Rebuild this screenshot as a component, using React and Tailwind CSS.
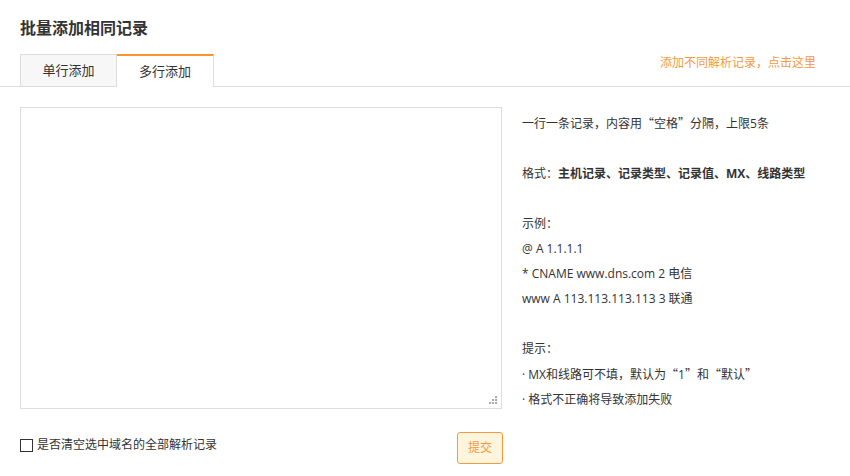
import React from "react";

const Q = ({ children }) => (
    <>
        <span className="font-['Noto_Sans_CJK_SC',sans-serif]">“</span>
        {children}
        <span className="font-['Noto_Sans_CJK_SC',sans-serif]">”</span>
    </>
);

const App = () => {
    return (
        <div className="w-[850px] h-[476px] bg-white text-[#333] font-['Open_Sans','Noto_Sans_CJK_SC',sans-serif]">
            <h1 className="pl-[20px] pt-[17px] h-[55px] text-[16px] leading-[22px] font-bold text-[#333]">批量添加相同记录</h1>
            <div className="flex items-end h-[32px] pl-[20px] border-b border-[#ddd]">
                <button className="w-[97px] h-[32px] bg-[#f7f7f7] border border-[#ddd] border-b-0 text-[13px] text-[#333]">单行添加</button>
                <button className="w-[97px] h-[33px] -mb-px bg-white border-r border-[#ddd] border-t-2 border-t-[#f7972f] text-[13px] text-[#333]">多行添加</button>
                <div className="flex-1" />
                <a className="mr-[34px] mb-[15px] text-[12px] leading-[16px] text-[#f59a3e] cursor-pointer">添加不同解析记录，点击这里</a>
            </div>
            <div className="flex pl-[20px] pt-[20px]">
                <div className="relative w-[482px] h-[302px]">
                    <textarea className="w-full h-full border border-[#ddd] outline-none resize-none p-2 text-[12px]" />
                    {/* dotted resize grip */}
                    <div className="absolute right-[5px] bottom-[5px] grid grid-cols-3 gap-[1px]">
                        <span className="w-[2px] h-[2px]" />
                        <span className="w-[2px] h-[2px]" />
                        <span className="w-[2px] h-[2px] bg-[#aaa]" />
                        <span className="w-[2px] h-[2px]" />
                        <span className="w-[2px] h-[2px] bg-[#aaa]" />
                        <span className="w-[2px] h-[2px] bg-[#aaa]" />
                        <span className="w-[2px] h-[2px] bg-[#aaa]" />
                        <span className="w-[2px] h-[2px] bg-[#aaa]" />
                        <span className="w-[2px] h-[2px] bg-[#aaa]" />
                    </div>
                </div>
                <div className="ml-[20px] pt-[3px] text-[12px] leading-[25px] text-[#333]">
                    <p>一行一条记录，内容用<Q>空格</Q>分隔，上限5条</p>
                    <p className="mt-[25px]">格式：<span className="font-bold">主机记录、记录类型、记录值、MX、线路类型</span></p>
                    <p className="mt-[25px]">示例：</p>
                    <p>@ A 1.1.1.1</p>
                    <p>* CNAME www.dns.com 2 电信</p>
                    <p>www A 113.113.113.113 3 联通</p>
                    <p className="mt-[25px]">提示：</p>
                    <p>· MX和线路可不填，默认为<Q>1</Q>和<Q>默认</Q></p>
                    <p>· 格式不正确将导致添加失败</p>
                </div>
            </div>
            <div className="flex items-center w-[503px] pl-[20px] mt-[20px] justify-between">
                <label className="flex items-center gap-[4px] text-[12px] text-[#333] -mt-[6px]">
                    <span className="w-[13px] h-[13px] border border-[#333] bg-white" />
                    是否清空选中域名的全部解析记录
                </label>
                <button className="w-[46px] h-[32px] rounded-[3px] border border-[#f59a3e] bg-[#fff5dc] text-[12px] text-[#f59a3e]">提交</button>
            </div>
        </div>
    );
};

export default App;
